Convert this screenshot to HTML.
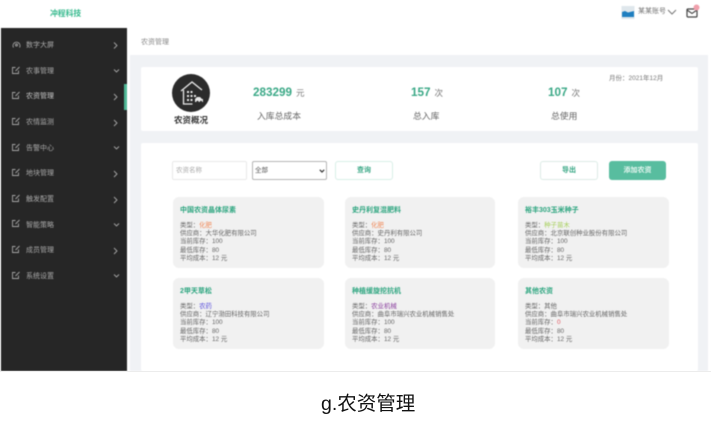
<!DOCTYPE html>
<html lang="zh">
<head>
<meta charset="utf-8">
<title>农资管理</title>
<style>
html,body{margin:0;padding:0;background:#fff}
body{width:711px;height:427px;overflow:hidden;position:relative;font-family:"Liberation Sans","Noto Sans CJK SC",sans-serif}
#app{position:absolute;left:0;top:0;width:711px;height:372px;overflow:hidden;filter:blur(.5px);background:#fff}
.a{position:absolute;white-space:nowrap}
.side{position:absolute;left:1px;top:28px;width:126px;height:343px;background:#262626}
.m{position:absolute;left:26px;font-size:7px;line-height:10px;color:#a9a9a9}
.bg{position:absolute;left:130px;top:55px;width:578px;height:316px;background:#f0f2f5}
.panel{position:absolute;left:141px;width:557px;background:#fff;border-radius:2px}
.num{font-size:11.7px;font-weight:bold;color:#3aa886;line-height:14px}
.unit{font-size:8.5px;font-weight:normal;color:#777;margin-left:4px}
.lab{font-size:8.8px;color:#666;line-height:12px;text-align:center}
.btn{position:absolute;box-sizing:border-box;height:19px;top:161px;border:1px solid #d8efe7;border-radius:3px;background:#fff;color:#3aa886;font-size:7px;line-height:17px;text-align:center;font-weight:bold}
.card{position:absolute;width:151px;height:71px;background:#f1f1f1;border-radius:6px;font-size:6.4px;color:#666}
.t{position:absolute;left:7px;top:9px;font-size:7px;line-height:9px;font-weight:bold;color:#2ca57f;white-space:nowrap}
.l{position:absolute;left:7px;top:24.5px;line-height:8.4px;white-space:nowrap}
</style>
</head>
<body>
<div id="app">
  <div class="a" style="left:50px;top:8.500px;font-size:7.800px;line-height:10px;font-weight:bold;color:#35b98d">冲程科技</div>

  <svg class="a" style="left:621px;top:6px" width="14" height="13" viewBox="0 0 14 13"><rect x="0.5" y="0" width="13" height="13" fill="#dfe7ec"/><path d="M1 11V6l3-1 3 1.5L13 5v6z" fill="#1f7fc0"/></svg>
  <div class="a" style="left:638px;top:7px;font-size:7px;line-height:9px;color:#777">某某账号</div>
  <svg class="a" style="left:667px;top:9px" width="10" height="6" viewBox="0 0 10 6"><path d="M1 1l4 4 4-4" fill="none" stroke="#777" stroke-width="1"/></svg>
  <svg class="a" style="left:686px;top:4px" width="14" height="14" viewBox="0 0 14 14"><rect x="1" y="5" width="10" height="8" rx="1" fill="#fff" stroke="#444" stroke-width="1.2"/><path d="M1 6l5 3.5L11 6" fill="none" stroke="#444" stroke-width="1.1"/><circle cx="10.5" cy="3.5" r="3" fill="#f0a0ac"/></svg>

  <div class="side"></div>
  <div class="a" style="left:124px;top:84px;width:3px;height:26px;background:#4fb896"></div>

  <svg class="a" style="left:0;top:28px" width="127" height="343" viewBox="0 28 127 343" fill="none" stroke="#a5a5a5" stroke-width=".9">
    <path d="M13.500 47.500a3.500 3.500 0 1 1 6 0"/><circle cx="16.500" cy="45" r="1"/>
    <path d="M18.500 70.500v3h-6v-6h3M15.500 71l4-4"/>
    <path d="M18.500 95.500v3h-6v-6h3M15.500 96l4-4"/>
    <path d="M18.500 121.500v3h-6v-6h3M15.500 122l4-4"/>
    <path d="M18.500 147.500v3h-6v-6h3M15.500 148l4-4"/>
    <path d="M18.500 172.500v3h-6v-6h3M15.500 173l4-4"/>
    <path d="M18.500 198.500v3h-6v-6h3M15.500 199l4-4"/>
    <path d="M18.500 223.500v3h-6v-6h3M15.500 224l4-4"/>
    <path d="M18.500 249.500v3h-6v-6h3M15.500 250l4-4"/>
    <path d="M18.500 275.500v3h-6v-6h3M15.500 276l4-4"/>
    <path d="M114 42.500l3 3-3 3"/>
    <path d="M114 69.500l2.500 2.500 2.500-2.500"/>
    <path d="M114 94l3 3-3 3"/>
    <path d="M114 120l3 3-3 3"/>
    <path d="M114 146.500l2.500 2.500 2.500-2.500"/>
    <path d="M114 171l3 3-3 3"/>
    <path d="M114 197l3 3-3 3"/>
    <path d="M114 223.500l2.500 2.500 2.500-2.500"/>
    <path d="M114 248l3 3-3 3"/>
    <path d="M114 274.500l2.500 2.500 2.500-2.500"/>
  </svg>

  <div class="m" style="top:41px">数字大屏</div>
  <div class="m" style="top:67px">农事管理</div>
  <div class="m" style="top:92px;color:#c8c8c8">农资管理</div>
  <div class="m" style="top:118px">农情监测</div>
  <div class="m" style="top:144px">告警中心</div>
  <div class="m" style="top:169px">地块管理</div>
  <div class="m" style="top:195px">触发配置</div>
  <div class="m" style="top:221px">智能策略</div>
  <div class="m" style="top:246px">成员管理</div>
  <div class="m" style="top:272px">系统设置</div>

  <div class="a" style="left:141px;top:38px;font-size:7px;line-height:10px;color:#888">农资管理</div>

  <div class="bg"></div>

  <div class="panel" style="top:67px;height:64px"></div>
  <div class="a" style="left:172px;top:74px;width:38px;height:38px;border-radius:50%;background:#2b2b2b"></div>
  <svg class="a" style="left:172px;top:74px" width="38" height="38" viewBox="0 0 38 38" fill="none" stroke="#e8e8e8" stroke-width="1.300">
    <path d="M9 17L20 8l10 8"/>
    <path d="M11.500 16v14h9"/>
    <g fill="#e8e8e8" stroke="none"><rect x="15" y="17" width="2" height="2"/><rect x="18.500" y="17" width="2" height="2"/><rect x="15" y="21" width="2" height="2"/><rect x="18.500" y="21" width="2" height="2"/><rect x="22" y="21" width="2" height="2"/><rect x="15" y="25" width="2" height="2"/><rect x="18.500" y="25" width="2" height="2"/><path d="M23 28v-3l2-2h3l2 2h1v3z"/></g>
    <g fill="#2b2b2b" stroke="none"><circle cx="25.500" cy="28" r="1.200"/><circle cx="29" cy="28" r="1.200"/></g>
  </svg>
  <div class="a" style="left:174px;top:115px;font-size:8.500px;line-height:11px;font-weight:bold;color:#333">农资概况</div>

  <div class="a num" style="left:253px;top:85.500px">283299<span class="unit">元</span></div>
  <div class="a lab" style="left:257px;top:110px">入库总成本</div>
  <div class="a num" style="left:411px;top:85.500px">157<span class="unit">次</span></div>
  <div class="a lab" style="left:413px;top:110px">总入库</div>
  <div class="a num" style="left:548px;top:85.500px">107<span class="unit">次</span></div>
  <div class="a lab" style="left:551px;top:110px">总使用</div>
  <div class="a" style="left:609px;top:74px;font-size:6.500px;line-height:9px;color:#777">月份：2021年12月</div>

  <div class="panel" style="top:143px;height:228px"></div>

  <div class="a" style="left:172px;top:161px;box-sizing:border-box;width:75px;height:19px;border:1px solid #e9e9e9;border-radius:2px;background:#fff;font-size:6.500px;line-height:17px;color:#aaa;padding-left:3px">农资名称</div>
  <div class="a" style="left:252px;top:161px;box-sizing:border-box;width:75px;height:19px;border:1px solid #b5b5b5;border-radius:2px;background:#fff;font-size:6.500px;line-height:17px;color:#555;padding-left:2px">全部</div>
  <svg class="a" style="left:319px;top:169px" width="6" height="4" viewBox="0 0 6 4"><path d="M.8.800L3 3 5.200.800" fill="none" stroke="#333" stroke-width="1.200"/></svg>
  <div class="btn" style="left:335px;width:58px">查询</div>
  <div class="btn" style="left:540px;width:58px;border-color:#dcebe6">导出</div>
  <div class="btn" style="left:609px;width:57px;border:0;background:#58bd9f;color:#e6f6f0;line-height:19px">添加农资</div>

  <div class="card" style="left:173px;top:197px">
    <div class="t">中国农资晶体尿素</div>
    <div class="l">类型：<span style="color:#f08a5a">化肥</span><br>供应商：大华化肥有限公司<br>当前库存：100<br>最低库存：80<br>平均成本：12 元</div>
  </div>
  <div class="card" style="left:345px;top:197px;width:150px">
    <div class="t">史丹利复混肥料</div>
    <div class="l">类型：<span style="color:#f08a5a">化肥</span><br>供应商：史丹利有限公司<br>当前库存：100<br>最低库存：80<br>平均成本：12 元</div>
  </div>
  <div class="card" style="left:518px;top:197px">
    <div class="t">裕丰303玉米种子</div>
    <div class="l">类型：<span style="color:#a6cf5a">种子苗木</span><br>供应商：北京联创种业股份有限公司<br>当前库存：100<br>最低库存：80<br>平均成本：12 元</div>
  </div>
  <div class="card" style="left:173px;top:278px">
    <div class="t">2甲天草松</div>
    <div class="l">类型：<span style="color:#5a50dc">农药</span><br>供应商：辽宁渤田科技有限公司<br>当前库存：100<br>最低库存：80<br>平均成本：12 元</div>
  </div>
  <div class="card" style="left:345px;top:278px;width:150px">
    <div class="t">种植缓旋挖抗机</div>
    <div class="l">类型：<span style="color:#8a3f9e">农业机械</span><br>供应商：曲阜市瑞兴农业机械销售处<br>当前库存：100<br>最低库存：80<br>平均成本：12 元</div>
  </div>
  <div class="card" style="left:518px;top:278px">
    <div class="t">其他农资</div>
    <div class="l">类型：其他<br>供应商：曲阜市瑞兴农业机械销售处<br>当前库存：<span style="color:#e0555f">0</span><br>最低库存：80<br>平均成本：12 元</div>
  </div>
</div>
<div class="a" style="left:0;top:371px;width:711px;height:1px;background:#ececec"></div>
<div class="a" style="left:321px;top:392px;font-size:19.500px;line-height:24px;color:#111">g.农资管理</div>
</body>
</html>
